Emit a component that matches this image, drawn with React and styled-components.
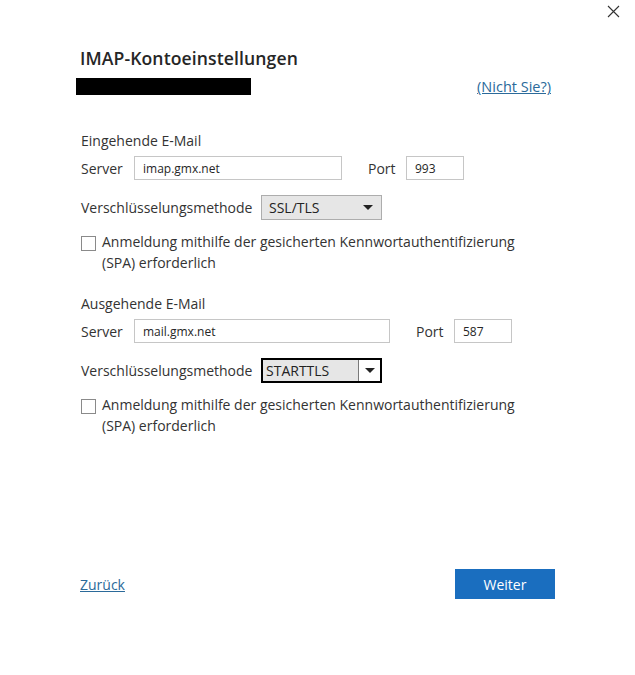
import React from 'react'
import styled, { createGlobalStyle } from 'styled-components'

const GlobalStyle = createGlobalStyle`
  html, body {
    margin: 0;
    padding: 0;
    background: #fff;
  }
  body {
    font-family: "Open Sans", "Noto Sans", sans-serif;
    color: #262626;
  }
`;

const Window = styled.div`
  position: relative;
  width: 635px;
  height: 675px;
  box-sizing: border-box;
  padding: 46px 84px 0 80px;
  display: flex;
  flex-direction: column;
`;

const CloseButton = styled.button`
  position: absolute;
  top: 0;
  right: 10px;
  width: 24px;
  height: 22px;
  border: none;
  background: none;
  padding: 0;
  display: flex;
  align-items: center;
  justify-content: center;
`;

const Title = styled.h1`
  margin: 0;
  font-size: 17.6px;
  font-weight: 600;
  color: #262626;
  letter-spacing: 0.1px;
`;

const AccountRow = styled.div`
  display: flex;
  align-items: center;
  justify-content: space-between;
  margin-top: 7px;
  margin-left: -4px;
`;

const Redacted = styled.div`
  width: 175px;
  height: 17px;
  background: #000;
`;

const LinkText = styled.a`
  color: #2b6a9a;
  font-size: ${p => p.$size || 14}px;
  text-decoration: underline;
  cursor: pointer;
`;

const Section = styled.section`
  display: flex;
  flex-direction: column;
  margin-top: ${p => p.$top}px;
  padding-left: 1px;
`;

const SectionTitle = styled.div`
  font-size: 14px;
  color: #333;
  line-height: 20px;
`;

const Row = styled.div`
  display: flex;
  align-items: center;
  margin-top: ${p => p.$top || 0}px;
`;

const Label = styled.label`
  font-size: 14px;
  color: #333;
  width: ${p => p.$width}px;
  flex-shrink: 0;
`;

const TextBox = styled.div`
  box-sizing: border-box;
  width: ${p => p.$width}px;
  height: 24px;
  border: 1px solid #c6c6c6;
  background: #fff;
  font-size: 12px;
  color: #262626;
  display: flex;
  align-items: center;
  padding-left: 8px;
  margin-right: ${p => p.$gap || 0}px;
`;

const Select = styled.div`
  box-sizing: border-box;
  width: 121px;
  height: 25px;
  border: ${p => (p.$focused ? '2px solid #000' : '1px solid #adadad')};
  background: #e6e6e6;
  display: flex;
  align-items: stretch;
  font-size: 14px;
  color: #222;
`;

const SelectValue = styled.div`
  flex: 1;
  display: flex;
  align-items: center;
  padding-left: ${p => (p.$focused ? 3 : 7)}px;
`;

const SelectArrow = styled.div`
  width: 21px;
  display: flex;
  align-items: center;
  justify-content: center;
  background: ${p => (p.$focused ? '#fff' : 'transparent')};
  border-left: ${p => (p.$focused ? '1px solid #7a7a7a' : 'none')};
  margin-right: ${p => (p.$focused ? 0 : 3)}px;
`;

const Arrow = styled.span`
  width: 0;
  height: 0;
  border-left: 5px solid transparent;
  border-right: 5px solid transparent;
  border-top: 5px solid #222;
`;

const CheckRow = styled.div`
  display: flex;
  align-items: flex-start;
  margin-top: 15px;
`;

const CheckBox = styled.span`
  box-sizing: border-box;
  width: 15px;
  height: 15px;
  border: 1px solid #8a8a8a;
  background: #fff;
  flex-shrink: 0;
  margin-top: 1px;
  margin-right: 6px;
`;

const CheckText = styled.div`
  font-size: 14px;
  line-height: 20.5px;
  color: #333;
  margin-top: -3px;
`;

const Footer = styled.div`
  display: flex;
  align-items: center;
  justify-content: space-between;
  margin-top: auto;
  margin-bottom: 76px;
  margin-right: -4px;
`;

const PrimaryButton = styled.button`
  width: 100px;
  height: 30px;
  border: none;
  background: #1a6ebf;
  color: #fff;
  font-family: inherit;
  font-size: 14px;
  padding: 0;
`;

function Dropdown({ value, focused }) {
  return (
    <Select $focused={focused}>
      <SelectValue $focused={focused}>{value}</SelectValue>
      <SelectArrow $focused={focused}>
        <Arrow />
      </SelectArrow>
    </Select>
  );
}

function ServerSection({ title, top, server, serverWidth, port, method, focused, methodGap }) {
  return (
    <Section $top={top}>
      <SectionTitle>{title}</SectionTitle>
      <Row $top={5}>
        <Label $width={53}>Server</Label>
        <TextBox $width={serverWidth} $gap={26}>{server}</TextBox>
        <Label $width={38}>Port</Label>
        <TextBox $width={58}>{port}</TextBox>
      </Row>
      <Row $top={methodGap}>
        <Label $width={180}>Verschlüsselungsmethode</Label>
        <Dropdown value={method} focused={focused} />
      </Row>
      <CheckRow>
        <CheckBox />
        <CheckText>
          Anmeldung mithilfe der gesicherten Kennwortauthentifizierung
          <br />
          (SPA) erforderlich
        </CheckText>
      </CheckRow>
    </Section>
  );
}

export default function App() {
  return (
    <>
      <GlobalStyle />
      <Window>
        <CloseButton aria-label="Schließen">
          <svg width="13" height="13" viewBox="0 0 13 13">
            <path d="M1 1 L12 12 M12 1 L1 12" stroke="#333" strokeWidth="1.1" fill="none" />
          </svg>
        </CloseButton>
        <Title>IMAP-Kontoeinstellungen</Title>
        <AccountRow>
          <Redacted />
          <LinkText $size={14.5}>(Nicht Sie?)</LinkText>
        </AccountRow>
        <ServerSection
          title="Eingehende E-Mail"
          top={35}
          server="imap.gmx.net"
          serverWidth={208}
          port="993"
          method="SSL/TLS"
          methodGap={15}
        />
        <ServerSection
          title="Ausgehende E-Mail"
          top={21}
          server="mail.gmx.net"
          serverWidth={256}
          port="587"
          method="STARTTLS"
          methodGap={15}
          focused
        />
        <Footer>
          <LinkText>Zurück</LinkText>
          <PrimaryButton>Weiter</PrimaryButton>
        </Footer>
      </Window>
    </>
  );
}
